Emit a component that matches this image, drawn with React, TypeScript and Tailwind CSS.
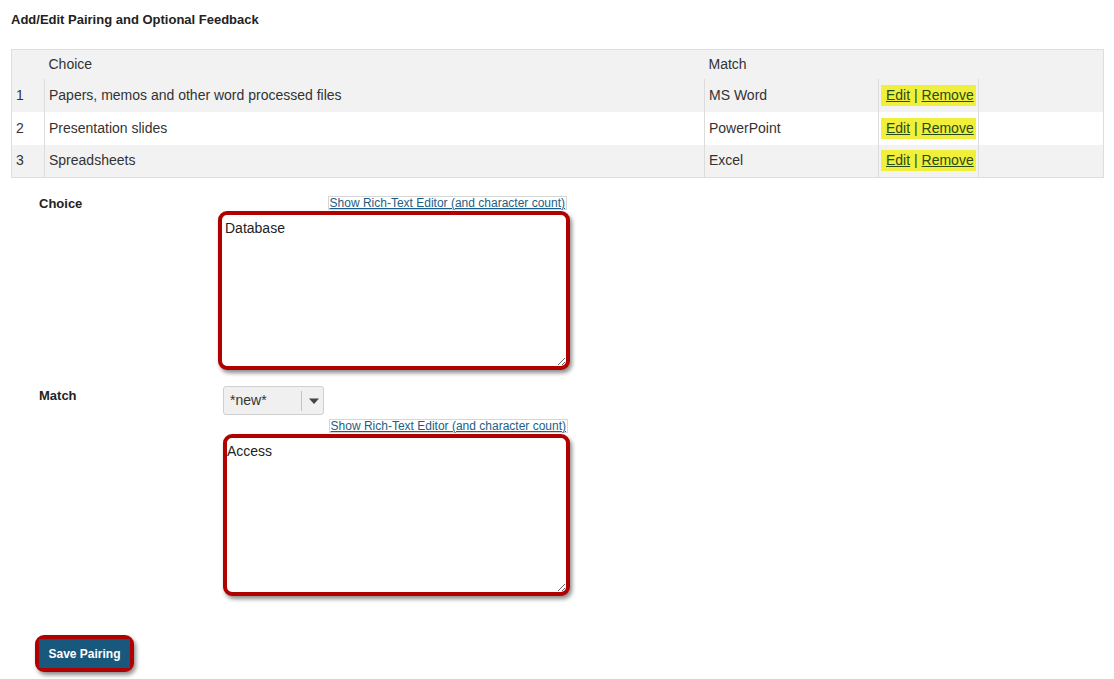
import React from 'react';

const rows = [
  { n: 1, choice: 'Papers, memos and other word processed files', match: 'MS Word', shade: true },
  { n: 2, choice: 'Presentation slides', match: 'PowerPoint', shade: false },
  { n: 3, choice: 'Spreadsheets', match: 'Excel', shade: true },
];

const RichTextLink = () => (
  <div className="flex justify-end">
    <a className="border border-[#d6d6d6] px-[1px] text-[12px] leading-[12px] text-[#1b5e85] underline">
      Show Rich-Text Editor (and character count)
    </a>
  </div>
);

const Annotated = ({ className, children }: { className?: string; children: React.ReactNode }) => (
  <div
    className={
      'rounded-[9px] border-4 border-[#b00000] bg-white shadow-[2px_3px_4px_rgba(0,0,0,0.45)] ' + (className ?? '')
    }
  >
    {children}
  </div>
);

export default function App() {
  return (
    <div className="min-h-screen bg-white font-['Liberation_Sans',Arial,sans-serif] text-[#333]">
      <div className="px-[11px] pt-[12px]">
        <h3 className="text-[13px] font-bold leading-[15px] text-[#222]">Add/Edit Pairing and Optional Feedback</h3>

        <table className="mt-[22px] w-[1093px] border-collapse border border-[#dedede] text-[14px]">
          <colgroup>
            <col className="w-[33px]" />
            <col className="w-[660px]" />
            <col className="w-[174px]" />
            <col className="w-[98px]" />
            <col />
          </colgroup>
          <thead>
            <tr className="h-[29px] bg-[#f2f2f2] text-left">
              <th className="font-normal" />
              <th className="pl-[4px] font-normal">Choice</th>
              <th className="pl-[4px] font-normal">Match</th>
              <th />
              <th />
            </tr>
          </thead>
          <tbody>
            {rows.map((r) => (
              <tr key={r.n} className={'h-[33px] ' + (r.shade ? 'bg-[#f2f2f2]' : 'bg-white')}>
                <td className="pl-[4px]">{r.n}</td>
                <td className="border-l border-[#dcdcdc] pl-[4px]">{r.choice}</td>
                <td className="border-l border-[#dcdcdc] pl-[4px]">{r.match}</td>
                <td className="border-x border-[#dcdcdc] px-[2px]">
                  <span className="block w-[95px] bg-[#f0f03c] py-[2px] pl-[5px] leading-[17px] text-[#2a4a16]">
                    <a className="underline">Edit</a> | <a className="underline">Remove</a>
                  </span>
                </td>
                <td />
              </tr>
            ))}
          </tbody>
        </table>
      </div>

      <div className="pl-[39px] pt-[18px]">
        <div className="flex">
          <div className="w-[179px] pt-[1px] text-[13px] font-bold leading-[14px] text-[#222]">Choice</div>
          <div className="w-[349px]">
            <RichTextLink />
            <Annotated className="mt-[1px] h-[159px] w-[352px]">
              <textarea
                className="block h-full w-full rounded-[5px] px-[3px] pt-[5px] text-[14px] leading-[16px] text-[#222] outline-none"
                defaultValue="Database"
              />
            </Annotated>
          </div>
        </div>

        <div className="mt-[16px] flex">
          <div className="w-[184px] pt-[3px] text-[13px] font-bold leading-[14px] text-[#222]">Match</div>
          <div className="w-[345px]">
            <div className="flex h-[29px] w-[101px] items-center rounded-[3px] border border-[#cfcfcf] bg-[#f0f0f0]">
              <span className="w-[77px] pl-[6px] text-[14px] text-[#333]">*new*</span>
              <span className="h-[20px] border-l border-[#c4c4c4]" />
              <svg width="12" height="8" viewBox="0 0 12 8" className="ml-[6px]">
                <path d="M1 1.5h10L6 7z" fill="#444" />
              </svg>
            </div>
            <div className="mt-[4px]">
              <RichTextLink />
            </div>
            <Annotated className="mt-[1px] h-[162px] w-[347px]">
              <textarea
                className="block h-full w-full rounded-[5px] px-0 pt-[5px] text-[14px] leading-[16px] text-[#222] outline-none"
                defaultValue="Access"
              />
            </Annotated>
          </div>
        </div>
      </div>

      <div className="pl-[35px] pt-[39px]">
        <Annotated className="inline-block bg-[#17587c]">
          <button className="h-[29px] w-[91px] bg-[#17587c] text-[12px] font-bold text-white">Save Pairing</button>
        </Annotated>
      </div>
    </div>
  );
}
